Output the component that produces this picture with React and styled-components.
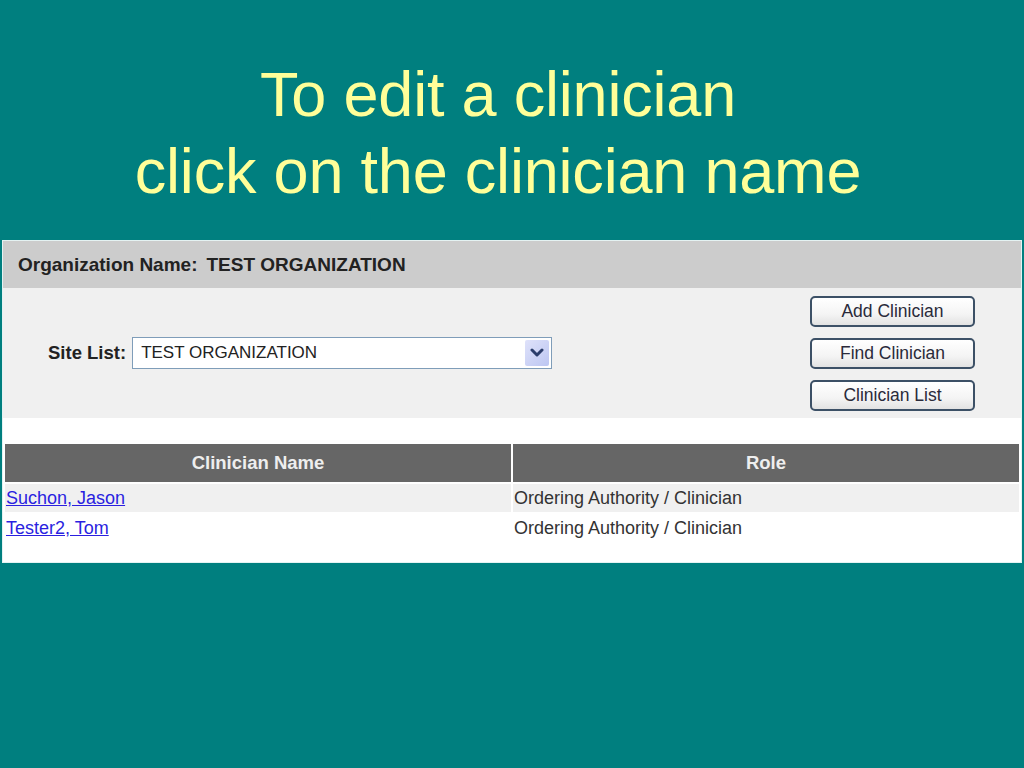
import React from 'react'
import styled, { createGlobalStyle } from 'styled-components'

const GlobalStyle = createGlobalStyle`
  html, body {
    margin: 0;
    padding: 0;
    background: #007f7f;
  }
  body {
    font-family: "Liberation Sans", Arial, sans-serif;
  }
`

const Slide = styled.div`
  width: 1024px;
  height: 768px;
  background: #007f7f;
  overflow: hidden;
`

const Title = styled.h1`
  margin: 0;
  padding: 56px 28px 0 0;
  height: 240px;
  box-sizing: border-box;
  text-align: center;
  font-family: "Liberation Sans", Arial, sans-serif;
  font-weight: normal;
  font-size: 63px;
  line-height: 77px;
  color: #ffff99;
  letter-spacing: -0.2px;
`

const Panel = styled.div`
  margin: 0 2px;
  background: #ffffff;
  border: 1px solid #e4f2f2;
  box-sizing: border-box;
  height: 323px;
  font-family: "Liberation Sans", Arial, sans-serif;
  font-size: 18px;
  color: #222;
`

const OrgHeader = styled.div`
  background: #cccccc;
  height: 47px;
  display: flex;
  align-items: center;
  padding-left: 15px;
  font-weight: bold;
  font-size: 19px;
  color: #222;
`

const OrgValue = styled.span`
  margin-left: 9px;
`

const FormArea = styled.div`
  background: #f0f0f0;
  height: 130px;
  display: flex;
  align-items: center;
  justify-content: space-between;
  padding: 0 46px 0 45px;
`

const SiteField = styled.div`
  display: flex;
  align-items: center;
  gap: 6px;
`

const FieldLabel = styled.label`
  font-weight: bold;
  font-size: 18.5px;
  color: #222;
`

const SelectBox = styled.div`
  width: 420px;
  height: 32px;
  box-sizing: border-box;
  border: 1px solid #7f9db9;
  background: #fff;
  display: flex;
  align-items: center;
  justify-content: space-between;
  padding: 0 2px 0 8px;
  font-size: 17px;
  color: #222;
`

const DropArrow = styled.span`
  width: 24px;
  height: 26px;
  background: linear-gradient(135deg, #dfe2fa 0%, #bcc6f2 100%);
  border-radius: 2px;
  display: flex;
  align-items: center;
  justify-content: center;
`

const ButtonStack = styled.div`
  display: flex;
  flex-direction: column;
  gap: 11px;
  padding-top: 1px;
`

const Button = styled.button`
  width: 165px;
  height: 31px;
  border: 2px solid #3c5066;
  border-radius: 5px;
  background: linear-gradient(#ffffff 0%, #f4f4f4 60%, #e2e2e2 100%);
  font-family: "Liberation Sans", Arial, sans-serif;
  font-size: 17.5px;
  color: #2a2a3a;
  padding: 0;
`

const Table = styled.table`
  margin-top: 24px;
  width: 100%;
  border-collapse: separate;
  border-spacing: 2px;
`

const HeadCell = styled.th`
  background: #666666;
  color: #eeeeee;
  font-weight: bold;
  font-size: 18.5px;
  height: 38px;
  width: 50%;
  padding: 0;
`

const Row = styled.tr`
  background: ${p => (p.$shaded ? '#f0f0f0' : '#ffffff')};
`

const Cell = styled.td`
  height: 28px;
  padding: 0 0 0 1px;
  font-size: 18px;
  color: #333;
`

const NameLink = styled.a`
  color: #2a1fe0;
  text-decoration: underline;
`

const Chevron = () => (
  <svg width="14" height="10" viewBox="0 0 14 10">
    <path d="M2 2 L7 7 L12 2" fill="none" stroke="#2b3d6b" strokeWidth="3" strokeLinecap="round" strokeLinejoin="round" />
  </svg>
)

const clinicians = [
  { name: 'Suchon, Jason', role: 'Ordering Authority / Clinician' },
  { name: 'Tester2, Tom', role: 'Ordering Authority / Clinician' },
]

export default function App() {
  return (
    <>
      <GlobalStyle />
      <Slide>
        <Title>
          To edit a clinician
          <br />
          click on the clinician name
        </Title>
        <Panel>
          <OrgHeader>
            Organization Name: <OrgValue>TEST ORGANIZATION</OrgValue>
          </OrgHeader>
          <FormArea>
            <SiteField>
              <FieldLabel>Site List:</FieldLabel>
              <SelectBox>
                TEST ORGANIZATION
                <DropArrow>
                  <Chevron />
                </DropArrow>
              </SelectBox>
            </SiteField>
            <ButtonStack>
              <Button>Add Clinician</Button>
              <Button>Find Clinician</Button>
              <Button>Clinician List</Button>
            </ButtonStack>
          </FormArea>
          <Table>
            <thead>
              <tr>
                <HeadCell>Clinician Name</HeadCell>
                <HeadCell>Role</HeadCell>
              </tr>
            </thead>
            <tbody>
              {clinicians.map((c, i) => (
                <Row key={c.name} $shaded={i === 0}>
                  <Cell>
                    <NameLink href="#">{c.name}</NameLink>
                  </Cell>
                  <Cell>{c.role}</Cell>
                </Row>
              ))}
            </tbody>
          </Table>
        </Panel>
      </Slide>
    </>
  )
}
